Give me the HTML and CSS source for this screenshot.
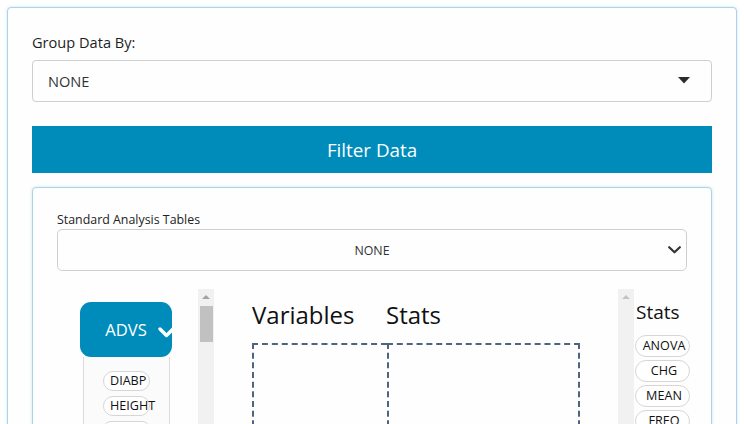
FILE: index.html
```html
<!DOCTYPE html>
<html>
<head>
<meta charset="utf-8">
<link rel="stylesheet" href="styles.css">
</head>
<body>
<div class="card">
  <div class="field-label">Group Data By:</div>
  <div class="select-main">
    <span>NONE</span>
    <svg class="caret" width="12" height="7" viewBox="0 0 12 7"><path d="M0 0 H12 L6 6.5 Z" fill="#2b2b2b"/></svg>
  </div>
  <div class="filter-btn">Filter Data</div>
  <div class="inner-card">
    <div class="small-label">Standard Analysis Tables</div>
    <div class="select-std">
      <span>NONE</span>
      <svg class="chev" width="13" height="8" viewBox="0 0 13 8"><path d="M1.2 1.2 L6.5 6.3 L11.8 1.2" fill="none" stroke="#333" stroke-width="2.2" stroke-linecap="round" stroke-linejoin="round"/></svg>
    </div>
    <div class="workspace">
      <div class="left-col">
        <div class="left-scroll">
          <div class="ds-btn">
            <span>ADVS</span>
            <svg class="ds-chev" width="20" height="16" viewBox="0 0 20 16"><path d="M2 5 L8.5 11.5 L16 4" fill="none" stroke="#fff" stroke-width="3.4" stroke-linecap="round" stroke-linejoin="round"/></svg>
          </div>
          <div class="var-list">
            <div class="pill var">DIABP</div>
            <div class="pill var">HEIGHT</div>
            <div class="pill var"></div>
          </div>
        </div>
        <div class="scrollbar">
          <div class="arrow"></div>
          <div class="thumb"></div>
        </div>
      </div>
      <div class="mid-col">
        <div class="drop-table">
          <div class="col c1">
            <div class="col-head">Variables</div>
            <div class="drop-box"></div>
          </div>
          <div class="col c2">
            <div class="col-head">Stats</div>
            <div class="drop-box right"></div>
          </div>
        </div>
      </div>
      <div class="right-col">
        <div class="scrollbar narrow">
          <div class="arrow light"></div>
        </div>
        <div class="stats-list">
          <div class="stats-head">Stats</div>
          <div class="pill stat">ANOVA</div>
          <div class="pill stat">CHG</div>
          <div class="pill stat">MEAN</div>
          <div class="pill stat">FREQ</div>
        </div>
      </div>
    </div>
  </div>
</div>
</body>
</html>
```

FILE: styles.css
```css
html, body {
  margin: 0;
  padding: 0;
  background: #ffffff;
  overflow: hidden;
  height: 424px;
}
body {
  font-family: "Open Sans", "DejaVu Sans", sans-serif;
  color: #222;
}
.card {
  margin: 7px 0 0 7px;
  width: 730px;
  height: 460px;
  box-sizing: border-box;
  border: 1px solid #a9d5ea;
  border-radius: 4px;
  box-shadow: 0 0 3px rgba(120, 170, 200, 0.35);
  background: #fefefe;
  padding: 24px 24px 0 24px;
}
.field-label {
  font-size: 14.6px;
  line-height: 21px;
  color: #1e1e1e;
  margin-bottom: 7px;
}
.select-main {
  height: 42px;
  box-sizing: border-box;
  border: 1px solid #cfcfcf;
  border-radius: 4px;
  display: flex;
  align-items: center;
  justify-content: space-between;
  padding: 0 21px 0 15px;
  font-size: 14.6px;
  color: #333;
  background: #fefefe;
}
.caret { margin-top: -2px; }
.filter-btn {
  margin-top: 24px;
  height: 47px;
  background: #008cba;
  color: #fff;
  font-size: 18.8px;
  display: flex;
  align-items: center;
  justify-content: center;
}
.inner-card {
  margin-top: 14px;
  height: 260px;
  border: 1px solid #a9d5ea;
  border-radius: 4px;
  box-shadow: 0 0 3px rgba(120, 170, 200, 0.35);
  padding: 24px 24px 0 24px;
  background: #fefefe;
}
.small-label {
  font-size: 12.4px;
  line-height: 16px;
  color: #222;
}
.select-std {
  margin-top: 1px;
  height: 42px;
  box-sizing: border-box;
  border: 1px solid #cfcfcf;
  border-radius: 5px;
  display: flex;
  align-items: center;
  justify-content: center;
  position: relative;
  font-size: 12.4px;
  color: #333;
}
.select-std .chev {
  position: absolute;
  right: 5px;
  top: 16px;
}
.workspace {
  margin-top: 18px;
  display: flex;
}
.workspace > div { flex-shrink: 0; }
.left-col {
  display: flex;
  width: 157px;
}
.left-scroll {
  width: 141px;
  padding: 13px 0 0 23px;
  box-sizing: border-box;
}
.ds-btn {
  width: 92px;
  height: 55px;
  background: #008cba;
  border-radius: 11px;
  color: #fff;
  font-size: 16.6px;
  display: flex;
  align-items: center;
  justify-content: center;
  position: relative;
  overflow: hidden;
}
.ds-chev {
  position: absolute;
  left: 78px;
  top: 22px;
}
.var-list {
  margin-left: 3px;
  width: 87px;
  height: 80px;
  box-sizing: border-box;
  border-left: 1px solid #dcdcdc;
  border-right: 1px solid #dcdcdc;
  background: #fbfbfb;
  padding: 14px 0 0 19px;
  display: flex;
  flex-direction: column;
  gap: 5px;
}
.pill {
  border: 1px solid #d6d6d6;
  border-radius: 12px;
  font-size: 12.6px;
  color: #111;
  background: #fff;
  white-space: nowrap;
  box-sizing: border-box;
}
.pill.var {
  width: 47px;
  height: 20px;
  line-height: 18px;
  padding-left: 6px;
}
.scrollbar {
  width: 16px;
  flex-shrink: 0;
  background: #f1f1f1;
  height: 150px;
  position: relative;
}
.arrow {
  width: 0;
  height: 0;
  border-left: 4px solid transparent;
  border-right: 4px solid transparent;
  border-bottom: 4px solid #a3a3a3;
  margin: 6px auto 0;
}
.arrow.light { border-bottom-color: #c4c4c4; }
.thumb {
  width: 13px;
  margin: 7px auto 0;
  height: 36px;
  background: #c1c1c1;
}
.mid-col {
  width: 404px;
  padding: 10px 0 0 38px;
  box-sizing: border-box;
}
.drop-table { display: flex; }
.col-head {
  font-size: 24px;
  line-height: 32px;
  color: #111;
  height: 44px;
}
.c1 { width: 135px; }
.c2 { width: 193px; }
.c2 .col-head { margin-left: -1px; }
.drop-box {
  height: 120px;
  border-top: 2px dashed #4e6580;
  border-left: 2px dashed #4e6580;
}
.drop-box.right { border-right: 2px dashed #4e6580; }
.right-col {
  display: flex;
}
.stats-list {
  padding: 10px 0 0 1px;
  display: flex;
  flex-direction: column;
  gap: 3px;
}
.stats-head {
  font-size: 19px;
  line-height: 26px;
  color: #111;
  margin-left: 1px;
  margin-bottom: 7px;
}
.pill.stat {
  width: 55px;
  height: 22px;
  line-height: 20px;
  text-align: center;
  padding-left: 3px;
}
```
